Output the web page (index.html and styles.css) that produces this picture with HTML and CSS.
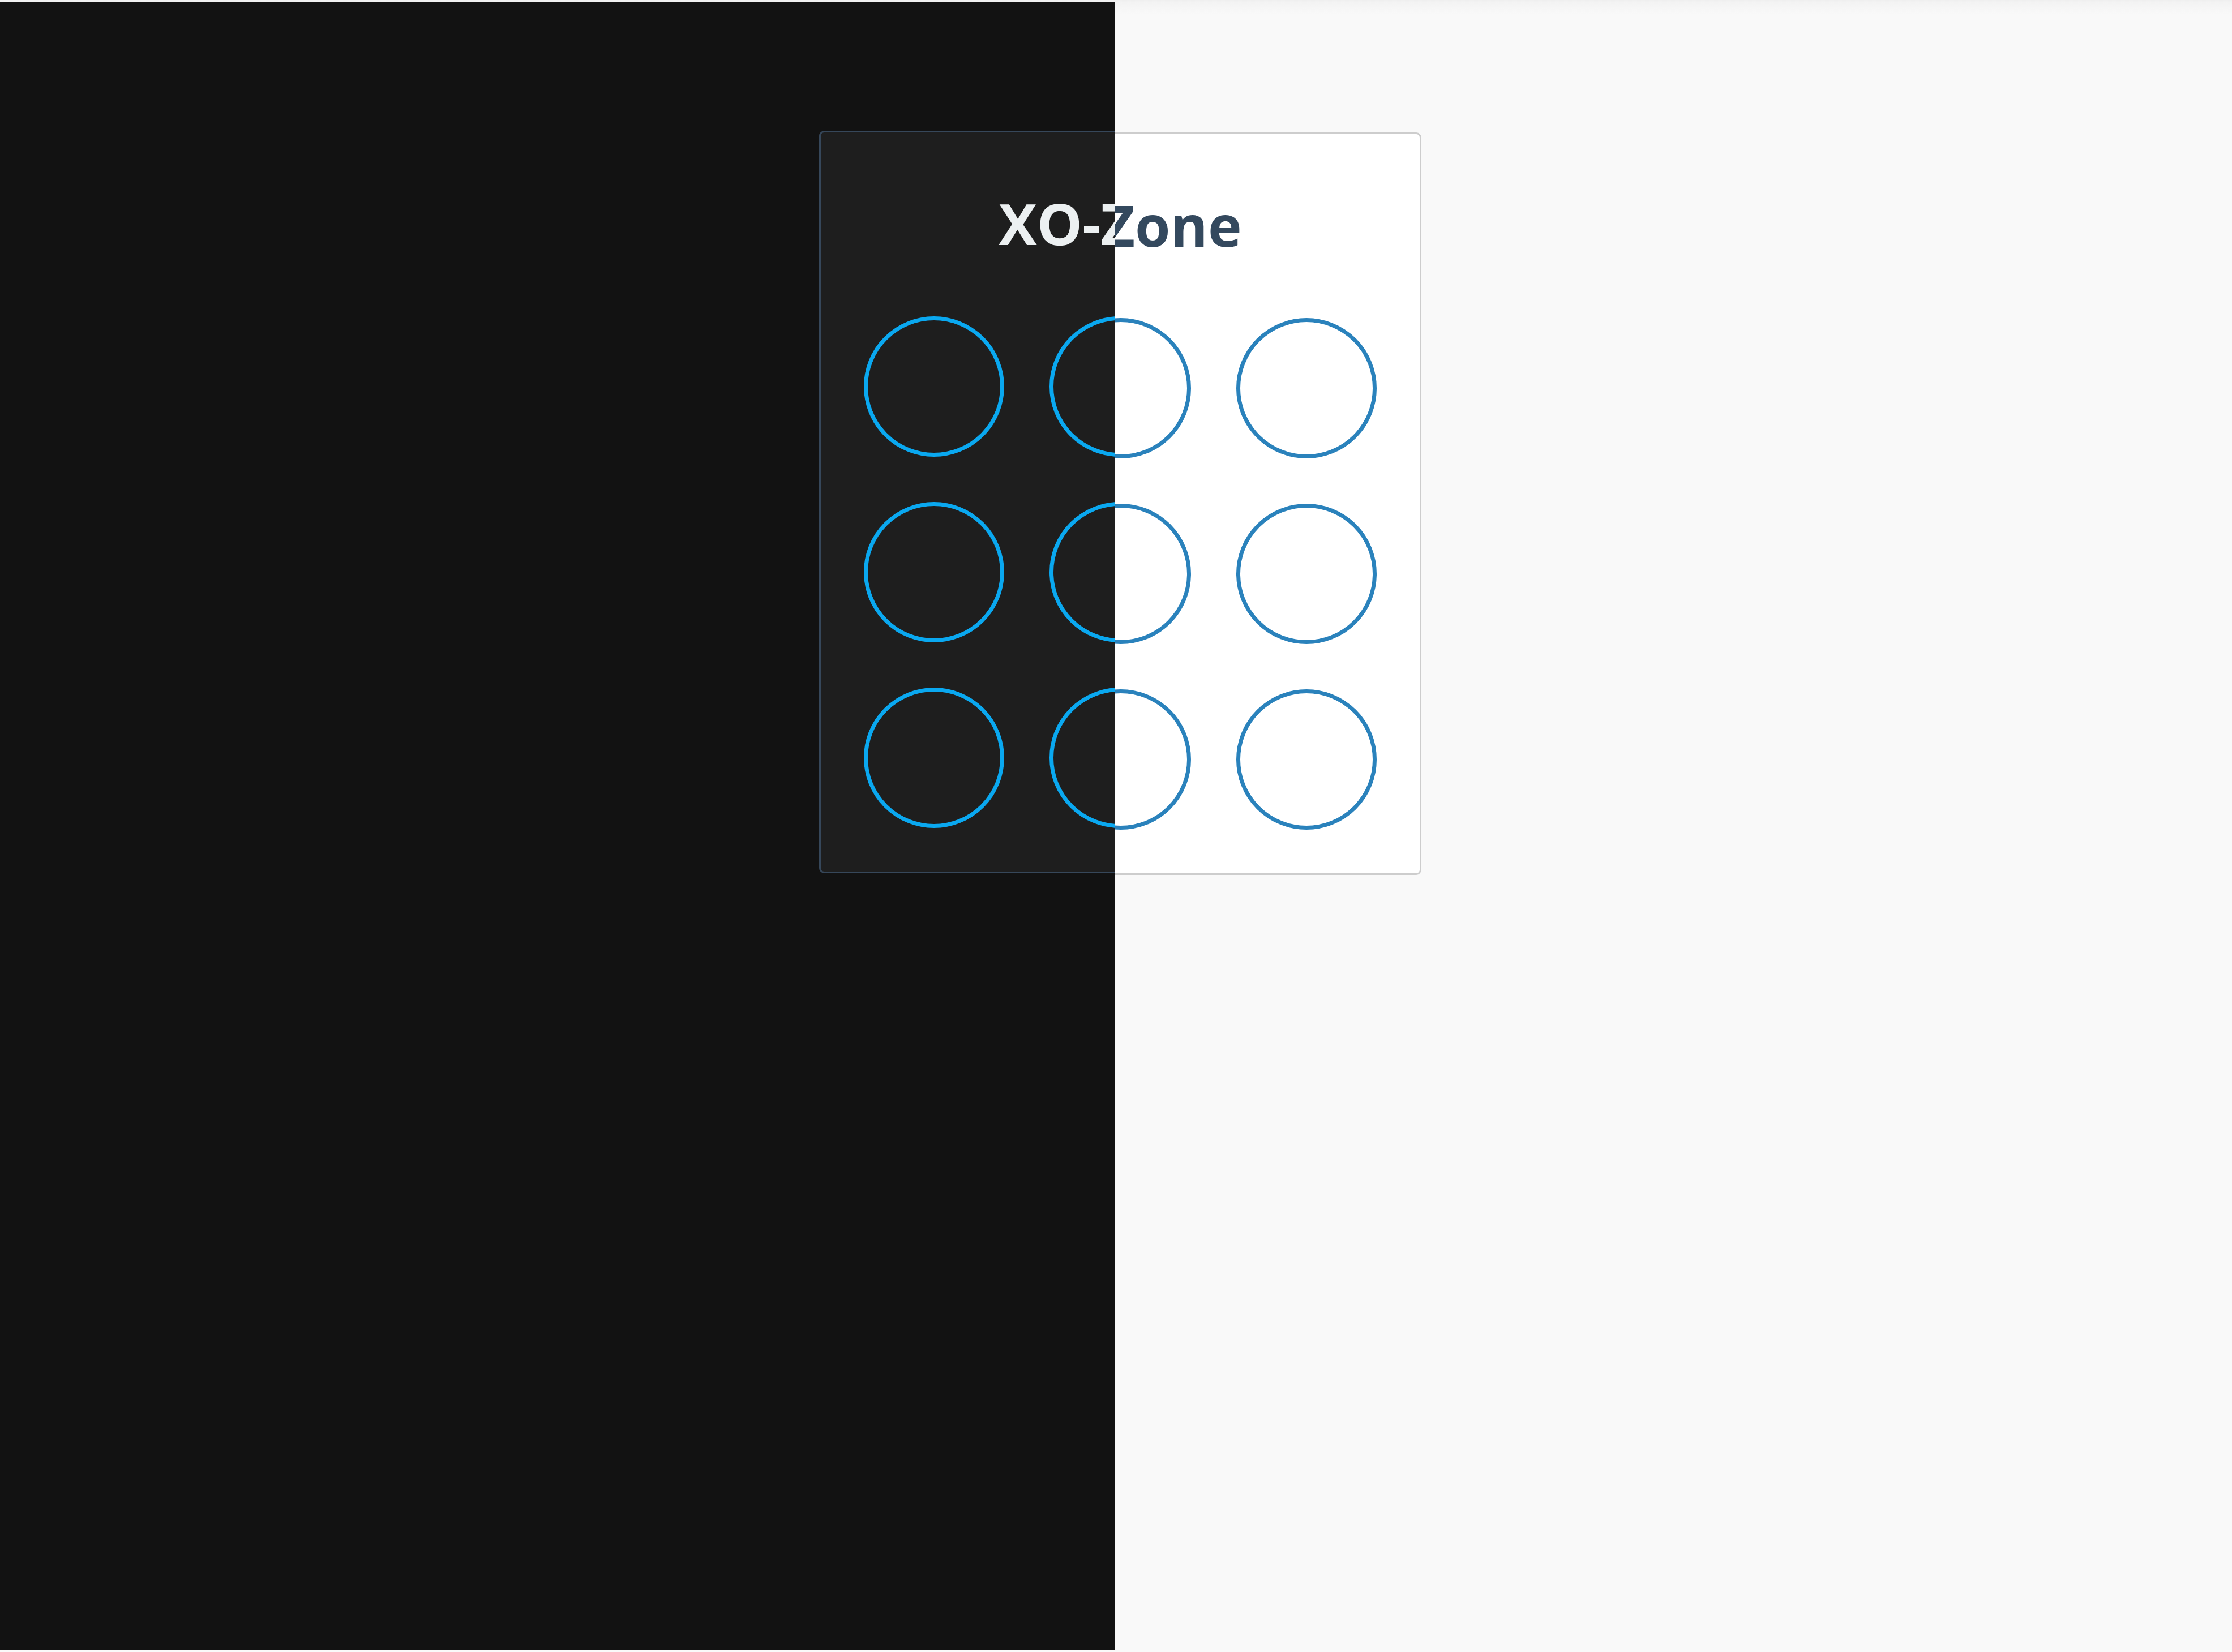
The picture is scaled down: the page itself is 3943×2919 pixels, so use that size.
FILE: index.html
```html
<!DOCTYPE html>
<html lang="en">
<head>
<meta charset="utf-8">
<title>XO-Zone</title>
<link rel="stylesheet" href="styles.css">
</head>
<body>
<div class="stage">
  <section class="theme theme-light">
    <div class="card">
      <h1 class="title">XO-Zone</h1>
      <div class="board">
        <div class="cell"></div><div class="cell"></div><div class="cell"></div>
        <div class="cell"></div><div class="cell"></div><div class="cell"></div>
        <div class="cell"></div><div class="cell"></div><div class="cell"></div>
      </div>
    </div>
  </section>
  <section class="theme theme-dark">
    <div class="card">
      <h1 class="title">XO-Zone</h1>
      <div class="board">
        <div class="cell"></div><div class="cell"></div><div class="cell"></div>
        <div class="cell"></div><div class="cell"></div><div class="cell"></div>
        <div class="cell"></div><div class="cell"></div><div class="cell"></div>
      </div>
    </div>
  </section>
</div>
</body>
</html>
```
FILE: styles.css
```css
* { box-sizing: border-box; }
html, body {
  margin: 0;
  padding: 0;
}
body {
  background: #f9f9f9;
  font-family: "Open Sans", "Noto Sans", "Liberation Sans", sans-serif;
  overflow: hidden;
}
.stage {
  display: grid;
  width: 3943px;
  height: 2919px;
}
.theme {
  grid-area: 1 / 1;
  overflow: hidden;
  display: block;
}
.theme-light {
  background: linear-gradient(#efefef 0px, #f3f3f3 4px, #f6f6f6 14px, #f9f9f9 26px, #f9f9f9 100%);
  padding-top: 234px;
  padding-left: 1449px;
}
.theme-dark {
  align-self: start;
  justify-self: start;
  margin-top: 3px;
  width: 1969px;
  height: 2913px;
  background: #121212;
  padding-top: 228px;
  padding-left: 1447px;
}
.card {
  width: 1062px;
  flex-shrink: 0;
  border: 3px solid #cdcdcd;
  border-radius: 9px;
  background: #ffffff;
  padding: 92px 76px 77px;
}
.theme-dark .card {
  background: #1e1e1e;
  border-color: #36475a;
}
.title {
  margin: 0 0 97px;
  font-size: 101px;
  line-height: 136px;
  font-weight: 700;
  text-align: center;
  color: #34495e;
  white-space: nowrap;
}
.theme-dark .title {
  color: #ecf0f1;
}
.board {
  display: grid;
  grid-template-columns: repeat(3, 248px);
  grid-auto-rows: 248px;
  gap: 80px;
}
.cell {
  width: 248px;
  height: 248px;
  border-radius: 50%;
  border: 7px solid #2a82bc;
}
.theme-dark .cell {
  border-color: #0aa8f0;
}
```
